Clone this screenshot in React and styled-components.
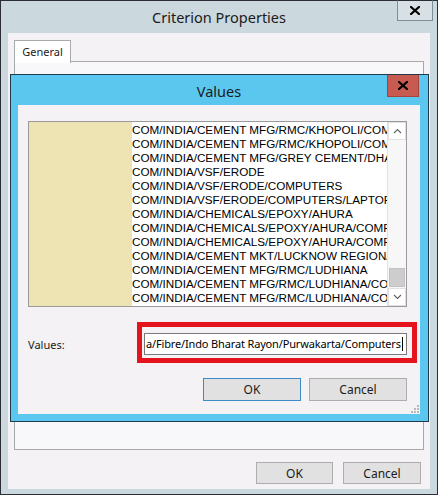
import React from 'react';
import styled, { createGlobalStyle } from 'styled-components';

const GlobalStyle = createGlobalStyle`
  html, body {
    margin: 0;
    padding: 0;
    width: 438px;
    height: 495px;
    overflow: hidden;
    background: #ffffff;
  }
  * {
    box-sizing: border-box;
  }
`;

const UI_FONT = `"Noto Sans", "Open Sans", sans-serif`;

const ROWS = [
  'COM/INDIA/CEMENT MFG/RMC/KHOPOLI/COMPUTERS',
  'COM/INDIA/CEMENT MFG/RMC/KHOPOLI/COMPUTERS/LAPTOP',
  'COM/INDIA/CEMENT MFG/GREY CEMENT/DHAR',
  'COM/INDIA/VSF/ERODE',
  'COM/INDIA/VSF/ERODE/COMPUTERS',
  'COM/INDIA/VSF/ERODE/COMPUTERS/LAPTOP',
  'COM/INDIA/CHEMICALS/EPOXY/AHURA',
  'COM/INDIA/CHEMICALS/EPOXY/AHURA/COMPUTERS',
  'COM/INDIA/CHEMICALS/EPOXY/AHURA/COMPUTERS/LAPTOP',
  'COM/INDIA/CEMENT MKT/LUCKNOW REGIONAL OFFICE',
  'COM/INDIA/CEMENT MFG/RMC/LUDHIANA',
  'COM/INDIA/CEMENT MFG/RMC/LUDHIANA/COMPUTERS',
  'COM/INDIA/CEMENT MFG/RMC/LUDHIANA/COMPUTERS/LAPTOP',
];

const App = () => {
  return (
    <>
      <GlobalStyle />
      <Window>
        <TitleBar>
          Criterion Properties
          <FrameClose>
            <CrossIcon />
          </FrameClose>
        </TitleBar>
        <Client>
          <TabStrip>
            <Tab>General</Tab>
          </TabStrip>
          <TabPanel />
          <ButtonRow $gap={10} $right={3}>
            <PushButton $width={77}>OK</PushButton>
            <PushButton $width={78}>Cancel</PushButton>
          </ButtonRow>
        </Client>

        <ValuesDialog>
          <DialogTitle>
            Values
            <RedClose>
              <CrossIcon />
            </RedClose>
          </DialogTitle>
          <DialogClient>
            <ListBox>
              <ImageColumn />
              <TextColumn>
                {ROWS.map((row, i) => (
                  <Row key={i}>{row}</Row>
                ))}
              </TextColumn>
              <ScrollBar>
                <ArrowButton>
                  <Chevron up />
                </ArrowButton>
                <Track>
                  <Thumb />
                </Track>
                <ArrowButton>
                  <Chevron />
                </ArrowButton>
              </ScrollBar>
            </ListBox>

            <FieldRow>
              <FieldLabel>Values:</FieldLabel>
              <Highlight>
                <TextBox>
                  a/Fibre/Indo Bharat Rayon/Purwakarta/Computers
                  <Caret />
                </TextBox>
              </Highlight>
            </FieldRow>

            <ButtonRow $gap={8} $top={15}>
              <PushButton $width={98} $height={23} $default>
                OK
              </PushButton>
              <PushButton $width={98} $height={23}>
                Cancel
              </PushButton>
            </ButtonRow>
            <SizeGrip>
              <GripDots />
            </SizeGrip>
          </DialogClient>
        </ValuesDialog>
      </Window>
    </>
  );
};

const CrossIcon = () => (
  <svg width="10" height="9" viewBox="0 0 10 9">
    <path
      d="M1 1 L9 8 M9 1 L1 8"
      stroke="#000"
      strokeWidth="2.2"
      strokeLinecap="square"
    />
  </svg>
);

const Chevron = ({ up }) => (
  <svg width="9" height="6" viewBox="0 0 9 6">
    <polyline
      points={up ? '1,5 4.5,1.5 8,5' : '1,1 4.5,4.5 8,1'}
      fill="none"
      stroke="#606060"
      strokeWidth="1.1"
    />
  </svg>
);

const GripDots = () => (
  <svg width="8" height="8" viewBox="0 0 8 8">
    {[
      [6, 0],
      [6, 3],
      [3, 3],
      [6, 6],
      [3, 6],
      [0, 6],
    ].map(([x, y], i) => (
      <rect key={i} x={x} y={y} width="2" height="2" fill="#b8b8b8" />
    ))}
  </svg>
);

const Window = styled.div`
  position: relative;
  width: 438px;
  height: 495px;
  border: 1px solid #2b2f33;
  background: #cbd8de;
  display: flex;
  flex-direction: column;
  font-family: ${UI_FONT};
`;

const TitleBar = styled.div`
  position: relative;
  height: 32px;
  display: flex;
  align-items: center;
  justify-content: center;
  padding-bottom: 1px;
  font-size: 14.5px;
  color: #1b1b1b;
`;

const FrameClose = styled.div`
  position: absolute;
  top: -1px;
  right: 4px;
  width: 36px;
  height: 21px;
  display: flex;
  align-items: center;
  justify-content: center;
  background: #d6e0e5;
  border: 1px solid #7f8d95;
  border-top-color: #2b2f33;
`;

const Client = styled.div`
  flex: 1;
  margin: 0 7px 5px 7px;
  padding: 7px 6px 5px 6px;
  display: flex;
  flex-direction: column;
  background: #f4f2f5;
`;

const TabStrip = styled.div`
  display: flex;
  height: 22px;
  position: relative;
  z-index: 1;
  margin-bottom: -1px;
`;

const Tab = styled.div`
  width: 57px;
  height: 23px;
  padding-top: 3px;
  text-align: center;
  font-size: 11px;
  color: #1b1b1b;
  background: #ffffff;
  border: 1px solid #a9a9a9;
  border-bottom: none;
`;

const TabPanel = styled.div`
  flex: 1;
  background: #f8f7f9;
  border: 1px solid #a9a9a9;
`;

const ButtonRow = styled.div`
  display: flex;
  justify-content: flex-end;
  gap: ${(p) => p.$gap}px;
  margin-top: ${(p) => p.$top ?? 12}px;
  margin-right: ${(p) => p.$right ?? 0}px;
`;

const PushButton = styled.div`
  width: ${(p) => p.$width}px;
  height: ${(p) => p.$height ?? 22}px;
  display: flex;
  align-items: center;
  justify-content: center;
  font-size: 12px;
  color: #1b1b1b;
  background: #e1e1e1;
  border: 1px solid ${(p) => (p.$default ? '#3c8bc6' : '#adadad')};
`;

const ValuesDialog = styled.div`
  position: absolute;
  left: 9px;
  top: 73px;
  width: 419px;
  height: 348px;
  border: 1px solid #1f3b4c;
  background: #5bc7ef;
  display: flex;
  flex-direction: column;
  padding: 0 8px 7px 7px;
`;

const DialogTitle = styled.div`
  position: relative;
  height: 30px;
  display: flex;
  align-items: center;
  justify-content: center;
  padding-top: 2px;
  font-size: 14.5px;
  color: #1b1b1b;
`;

const RedClose = styled.div`
  position: absolute;
  top: 0;
  right: 1px;
  width: 32px;
  height: 22px;
  display: flex;
  align-items: center;
  justify-content: center;
  background: #c75a51;
  border: 1px solid #a8433c;
  border-top: none;
`;

const DialogClient = styled.div`
  position: relative;
  flex: 1;
  background: #f4f2f5;
  padding: 16px 13px 13px 10px;
  display: flex;
  flex-direction: column;
`;

const ListBox = styled.div`
  height: 186px;
  display: flex;
  border: 1px solid #9a9a9a;
  background: #ffffff;
`;

const ImageColumn = styled.div`
  width: 103px;
  background: #eee3b3;
`;

const TextColumn = styled.div`
  flex: 1;
  min-width: 0;
  overflow: hidden;
  padding-top: 1px;
`;

const Row = styled.div`
  height: 14px;
  line-height: 14px;
  white-space: nowrap;
  font-family: "Liberation Sans", Arial, sans-serif;
  font-size: 11.7px;
  color: #000000;
`;

const ScrollBar = styled.div`
  width: 19px;
  display: flex;
  flex-direction: column;
  background: #f7f7f7;
  border-left: 1px solid #e2e2e2;
`;

const ArrowButton = styled.div`
  height: 18px;
  display: flex;
  align-items: center;
  justify-content: center;
  background: #ffffff;
  border: 1px solid #e0e0e0;
`;

const Track = styled.div`
  flex: 1;
  display: flex;
  flex-direction: column;
  justify-content: flex-end;
  padding: 0 1px 1px 1px;
`;

const Thumb = styled.div`
  height: 19px;
  background: #cdcdcd;
  border: 1px solid #c2c2c2;
`;

const FieldRow = styled.div`
  display: flex;
  align-items: center;
  margin-top: 15px;
  margin-right: -10px;
`;

const FieldLabel = styled.div`
  width: 109px;
  padding-top: 4px;
  font-size: 11px;
  color: #1b1b1b;
`;

const Highlight = styled.div`
  width: 280px;
  height: 41px;
  border: 5px solid #e4131c;
  padding: 6px 5px 3px 2px;
  background: #f4f2f5;
`;

const TextBox = styled.div`
  position: relative;
  height: 22px;
  padding-left: 1px;
  border: 1px solid #7a7a7a;
  background: #ffffff;
  font-size: 11px;
  letter-spacing: -0.15px;
  line-height: 20px;
  color: #000000;
  white-space: nowrap;
  overflow: hidden;
`;

const Caret = styled.span`
  position: absolute;
  right: 3px;
  top: 3px;
  width: 1px;
  height: 14px;
  background: #000000;
`;

const SizeGrip = styled.div`
  position: absolute;
  right: 1px;
  bottom: 1px;
  display: flex;
`;

export default App;
